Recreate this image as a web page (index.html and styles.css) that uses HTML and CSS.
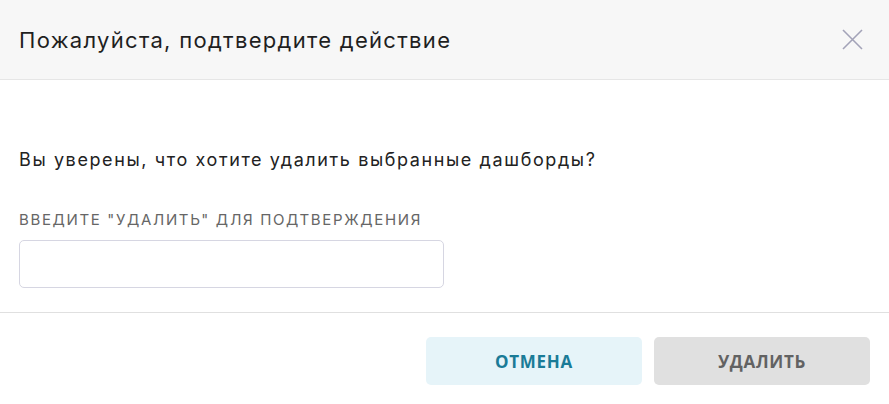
FILE: index.html
```html
<!DOCTYPE html>
<html lang="ru">
<head>
<meta charset="utf-8">
<link rel="stylesheet" href="styles.css">
</head>
<body>
<div class="modal">
  <div class="modal-header">
    <h2 class="modal-title">Пожалуйста, подтвердите действие</h2>
    <button class="close-btn" aria-label="Закрыть">
      <svg width="21" height="21" viewBox="0 0 21 21"><path d="M1 1L20 20M20 1L1 20" stroke="#a3a3b8" stroke-width="1.6" fill="none"/></svg>
    </button>
  </div>
  <div class="modal-body">
    <p class="question">Вы уверены, что хотите удалить выбранные дашборды?</p>
    <label class="field-label" for="confirm">ВВЕДИТЕ "УДАЛИТЬ" ДЛЯ ПОДТВЕРЖДЕНИЯ</label>
    <input id="confirm" class="field-input" type="text">
  </div>
  <div class="modal-footer">
    <button class="btn btn-cancel">ОТМЕНА</button>
    <button class="btn btn-delete">УДАЛИТЬ</button>
  </div>
</div>
</body>
</html>
```
FILE: styles.css
```css
html, body {
  margin: 0;
  padding: 0;
  background: #ffffff;
}
body {
  font-family: Inter, "Noto Sans", sans-serif;
  color: #222222;
}
.modal {
  width: 889px;
  height: 404px;
  display: flex;
  flex-direction: column;
  background: #fff;
}
.modal-header {
  height: 79px;
  box-sizing: content-box;
  border-bottom: 1px solid #e6e6e6;
  background: #f7f7f7;
  display: flex;
  align-items: center;
  justify-content: space-between;
  padding: 0 26px 0 19px;
}
.modal-title {
  margin: 0;
  font-size: 22px;
  letter-spacing: 1.3px;
  font-weight: 400;
  color: #1f1f1f;
  padding-top: 1px;
}
.close-btn {
  border: 0;
  background: none;
  padding: 0;
  width: 21px;
  height: 21px;
  display: flex;
  cursor: pointer;
}
.modal-body {
  padding: 67px 19px 24px;
  display: flex;
  flex-direction: column;
  align-items: flex-start;
  border-bottom: 1px solid #e0e0e0;
}
.question {
  margin: 0;
  font-size: 18px;
  letter-spacing: 1.6px;
  line-height: 26px;
  color: #222;
}
.field-label {
  margin-top: 38px;
  font-size: 15px;
  letter-spacing: 1.65px;
  line-height: 18px;
  color: #666;
}
.field-input {
  margin-top: 11px;
  width: 425px;
  height: 48px;
  box-sizing: border-box;
  border: 1px solid #d6d6e2;
  border-radius: 5px;
  outline: none;
  font: inherit;
}
.modal-footer {
  display: flex;
  justify-content: flex-end;
  gap: 12px;
  padding: 24px 19px 0;
}
.btn {
  width: 216px;
  height: 48px;
  border: 0;
  border-radius: 5px;
  font-family: "Open Sans", sans-serif;
  font-weight: 700;
  font-size: 17px;
  letter-spacing: 0.7px;
  cursor: pointer;
}
.btn-cancel {
  background: #e6f4f9;
  color: #1a7b97;
}
.btn-delete {
  background: #e0e0e0;
  color: #626262;
}
```
